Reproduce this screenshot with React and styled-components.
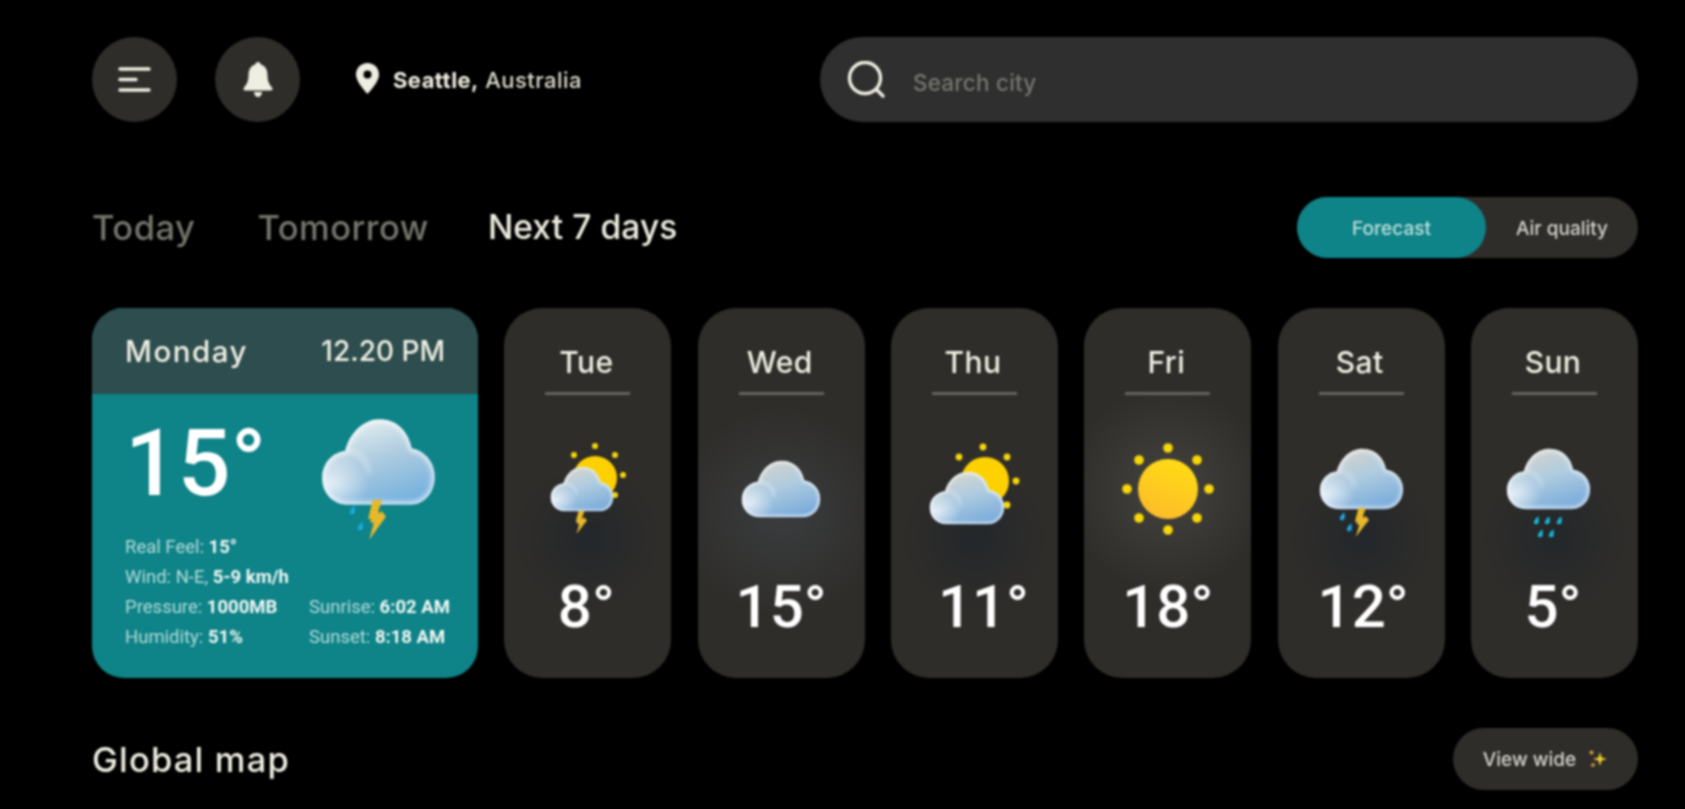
import React, { useId } from "react";
import styled, { createGlobalStyle } from "styled-components";

const cream = "#efeee2";
const panel = "#2f2d2a";
const teal = "#0e8388";

const Global = createGlobalStyle`
  html, body {
    margin: 0;
    background: #000;
    overflow: hidden;
  }
  * { box-sizing: border-box; }
`;

const Page = styled.div`
  width: 1685px;
  height: 809px;
  padding: 37px 47px 0 92px;
  background: #000;
  color: ${cream};
  font-family: Inter, "Liberation Sans", sans-serif;
  filter: blur(0.9px);
`;

const TopBar = styled.div`
  display: flex;
  align-items: center;
  height: 85px;
`;

const RoundButton = styled.div`
  width: 85px;
  height: 85px;
  border-radius: 50%;
  background: ${panel};
  display: flex;
  align-items: center;
  justify-content: center;
  margin-right: 38px;
`;

const Location = styled.div`
  display: flex;
  align-items: center;
  margin-left: 18px;
  font-size: 22px;
  font-weight: 500;
  letter-spacing: 0.45px;
  color: #dcdbcf;
  b { font-weight: 700; color: ${cream}; }
  svg { margin-right: 14px; margin-top: -2px; }
`;

const SearchBar = styled.div`
  margin-left: auto;
  width: 818px;
  height: 85px;
  border-radius: 43px;
  background: #2f2f2f;
  display: flex;
  align-items: center;
  padding-left: 27px;
`;

const SearchText = styled.div`
  margin-left: 26px;
  margin-top: 5px;
  font-size: 22.5px;
  font-weight: 500;
  letter-spacing: 0.2px;
  color: #75756f;
`;

const TabRow = styled.div`
  display: flex;
  align-items: center;
  justify-content: space-between;
  margin-top: 75px;
  height: 61px;
`;

const Tabs = styled.div`
  display: flex;
  gap: 62px;
`;

const Tab = styled.div`
  font-size: ${p => (p.$active ? "33.5px" : "34.5px")};
  font-weight: 500;
  letter-spacing: ${p => (p.$active ? "0.1px" : "0.5px")};
  margin-left: ${p => (p.$active ? "-3px" : "0")};
  color: ${p => (p.$active ? cream : "#75756d")};
`;

const Toggle = styled.div`
  width: 341px;
  height: 61px;
  border-radius: 31px;
  background: ${panel};
  display: flex;
  align-items: center;
`;

const ToggleOption = styled.div`
  height: 100%;
  width: ${p => (p.$active ? "189px" : "152px")};
  border-radius: 31px;
  padding-top: 1px;
  background: ${p => (p.$active ? teal : "transparent")};
  color: ${p => (p.$active ? "#bfe0dc" : "#d5d4cb")};
  display: flex;
  align-items: center;
  justify-content: center;
  font-size: 19px;
  font-weight: 500;
`;

const Cards = styled.div`
  display: flex;
  justify-content: space-between;
  margin-top: 50px;
  height: 370px;
`;

const MainCard = styled.div`
  width: 386px;
  border-radius: 32px;
  overflow: hidden;
  background: ${teal};
  display: flex;
  flex-direction: column;
`;

const MainHead = styled.div`
  height: 86px;
  background: #2e4d4e;
  padding: 0 33px;
  display: flex;
  align-items: center;
  justify-content: space-between;
  font-size: 28px;
  font-weight: 500;
`;

const HeadDay = styled.span`
  font-size: 29.5px;
  letter-spacing: 1.5px;
`;

const MainTop = styled.div`
  height: 138px;
  padding: 0 39px 0 33px;
  display: flex;
  align-items: flex-start;
  justify-content: space-between;
`;

const BigTemp = styled.div`
  font-family: Roboto, sans-serif;
  font-weight: 500;
  font-size: 93px;
  line-height: 92px;
  margin-top: 24px;
  color: #fff;
`;

const Details = styled.div`
  display: flex;
  padding-left: 33px;
`;

const DetailColumn = styled.div`
  width: ${p => p.$width};
  display: flex;
  flex-direction: column;
  justify-content: flex-end;
`;

const Detail = styled.div`
  height: 30px;
  line-height: 30px;
  font-family: Roboto, sans-serif;
  font-size: 18.5px;
  color: #b5dcda;
  white-space: nowrap;
  b { color: #f2f8f4; font-weight: 700; }
`;

const DayCard = styled.div`
  width: 167px;
  border-radius: 38px;
  padding-top: 34px;
  background: ${p => p.$glow}, ${panel};
  display: flex;
  flex-direction: column;
  align-items: center;
`;

const DayName = styled.div`
  height: 40px;
  line-height: 40px;
  font-size: 30px;
  font-weight: 500;
  letter-spacing: 0.4px;
  margin-left: -3px;
`;

const Rule = styled.div`
  width: 85px;
  height: 3px;
  margin-top: 10px;
  background: #65635d;
`;

const IconArea = styled.div`
  height: 188px;
  display: flex;
  align-items: center;
  justify-content: center;
`;

const DayTemp = styled.div`
  height: 46px;
  line-height: 46px;
  margin-top: 1px;
  margin-left: ${p => p.$shift}px;
  font-family: Roboto, sans-serif;
  font-weight: 500;
  font-size: 60px;
  color: #fff;
`;

const MapRow = styled.div`
  display: flex;
  align-items: center;
  justify-content: space-between;
  margin-top: 50px;
  height: 62px;
`;

const MapTitle = styled.div`
  font-size: 34.5px;
  font-weight: 500;
  letter-spacing: 1.2px;
  color: ${cream};
`;

const ViewWide = styled.div`
  width: 185px;
  height: 62px;
  border-radius: 31px;
  background: ${panel};
  display: flex;
  align-items: center;
  justify-content: center;
  gap: 12px;
  font-size: 19px;
  font-weight: 500;
  color: #d5d4cb;
`;

// cloud body, drawn in a 100x72 box and placed with x/y/w/h inside the parent svg
const Cloud = ({ x, y, w, h, top = "#d6d3cc", bottom = "#78aadb", flash }) => {
  const id = useId();
  const d = "M24 71C10 71 1 61 1 49C1 37 10 28 21 27C25 12 37 1 51 1C66 1 76 11 79 25C91 27 99 37 99 48C99 61 90 71 77 71Z";
  return (
    <svg x={x} y={y} width={w} height={h} viewBox="0 0 100 72" preserveAspectRatio="none">
      <defs>
        <linearGradient id={id + "f"} x1="0.3" y1="0" x2="0.72" y2="1">
          <stop offset="0" stopColor={top} />
          <stop offset="0.45" stopColor="#afcce0" />
          <stop offset="1" stopColor={bottom} />
        </linearGradient>
        <radialGradient id={id + "y"} cx="0.5" cy="1" r="0.5">
          <stop offset="0" stopColor="#f4dc6a" stopOpacity="0.95" />
          <stop offset="1" stopColor="#f4dc6a" stopOpacity="0" />
        </radialGradient>
        <radialGradient id={id + "l"} cx="0.08" cy="0.75" r="0.34">
          <stop offset="0" stopColor="#fff" stopOpacity="0.7" />
          <stop offset="1" stopColor="#fff" stopOpacity="0" />
        </radialGradient>
        <clipPath id={id + "c"}><path d={d} /></clipPath>
        <filter id={id + "b"} x="-20%" y="-20%" width="140%" height="140%">
          <feGaussianBlur stdDeviation="2.2" />
        </filter>
      </defs>
      <path d={d} fill={"url(#" + id + "f)"} />
      <g clipPath={"url(#" + id + "c)"}>
        <path d={d} fill={"url(#" + id + "l)"} />
        <path d={d} fill="none" stroke="#fff" strokeOpacity="0.8" strokeWidth="4.5" filter={"url(#" + id + "b)"} />
        <path d="M21 27C32 26 40 34 42 46" fill="none" stroke="#fff" strokeOpacity="0.4" strokeWidth="3" filter={"url(#" + id + "b)"} />
        {flash && <ellipse cx="55" cy="72" rx="30" ry="20" fill={"url(#" + id + "y)"} />}
      </g>
    </svg>
  );
};

const Bolt = ({ x, y, w, h }) => (
  <svg x={x} y={y} width={w} height={h} viewBox="0 0 17 39" preserveAspectRatio="none">
    <path d="M5 0H13.500L10 11.500L12 13L13 10.500L17 16L11 25L2 39L6 22.500L2.500 21.500L4 18.500H1Z" fill="#e6b82a" />
  </svg>
);

const Drop = ({ cx, cy, r = 3.2, fill = "#18a8e0" }) => (
  <path d={`M${cx + r * 0.7} ${cy - r * 1.5}C${cx + r} ${cy} ${cx + r} ${cy + r} ${cx} ${cy + r}C${cx - r} ${cy + r} ${cx - r} ${cy} ${cx + r * 0.7} ${cy - r * 1.5}Z`} fill={fill} />
);

const Dots = ({ points, r, fill = "#f7d708" }) => points.map(([cx, cy]) => <circle key={cx + "-" + cy} cx={cx} cy={cy} r={r} fill={fill} />);

// each svg is 120x110 and sits centred in the card's icon area
const TueIcon = () => (
  <svg width="120" height="110" viewBox="0 0 120 110">
    <circle cx="67" cy="44" r="22" fill="#fdd000" />
    <Dots r="3" points={[[67, 12], [46, 21], [87, 21], [95, 41], [87, 61]]} />
    <Cloud x="22" y="32" w="64" h="46" top="#d9d6cb" />
    <Bolt x="47" y="77" w="12" h="23" />
  </svg>
);

const WedIcon = () => (
  <svg width="120" height="110" viewBox="0 0 120 110">
    <Cloud x="20" y="26" w="80" h="58" />
  </svg>
);

const ThuIcon = () => (
  <svg width="120" height="110" viewBox="0 0 120 110">
    <circle cx="71" cy="47" r="24" fill="#fdd000" />
    <Dots r="3.4" points={[[69, 13], [45, 23], [93, 23], [102, 47], [93, 71]]} />
    <Cloud x="15" y="37" w="76" h="54" top="#d9d6cb" />
  </svg>
);

const FriIcon = () => {
  const id = useId();
  return (
    <svg width="120" height="110" viewBox="0 0 120 110">
      <defs>
        <linearGradient id={id} x1="0.7" y1="0" x2="0.3" y2="1">
          <stop offset="0" stopColor="#ffdc14" />
          <stop offset="1" stopColor="#fdbb2a" />
        </linearGradient>
      </defs>
      <circle cx="60" cy="55" r="30" fill={"url(#" + id + ")"} />
      <Dots r="4.8" points={[[60, 14], [60, 96], [19, 55], [101, 55], [31, 26], [89, 26], [31, 84], [89, 84]]} />
    </svg>
  );
};

const SatIcon = () => (
  <svg width="120" height="110" viewBox="0 0 120 110">
    <Cloud x="18" y="14" w="85" h="62" flash />
    <Bolt x="53" y="74" w="15" h="29" />
    <Drop cx={41} cy={83} />
    <Drop cx={48} cy={94} />
  </svg>
);

const SunIcon = () => (
  <svg width="120" height="110" viewBox="0 0 120 110">
    <Cloud x="12" y="14" w="85" h="62" />
    {[[42, 87], [53, 87], [65, 87], [46, 100], [57, 100]].map(([cx, cy]) => (
      <Drop key={cx + "-" + cy} cx={cx} cy={cy} fill="#14b9d4" />
    ))}
  </svg>
);

const MainIcon = () => (
  <svg width="122" height="126" viewBox="0 0 122 126" style={{ marginTop: 20 }}>
    <Cloud x="4" y="4" w="115" h="88" top="#e6f0f0" bottom="#72b0de" flash />
    <Bolt x="50" y="86" w="19" h="40" />
    <Drop cx={35} cy={97} r={3.6} />
    <Drop cx={43} cy={113} r={3.6} />
  </svg>
);

const shade = "radial-gradient(circle at 50% 62%, #23272b 0, rgba(35,39,43,0) 30%)";

const days = [
  { name: "Tue", temp: "8°", shift: -3, Icon: TueIcon, glow: shade },
  { name: "Wed", temp: "15°", shift: 0, Icon: WedIcon, glow: "radial-gradient(circle at 50% 55%, #3a3d3f 0, rgba(58,61,63,0) 48%)" },
  { name: "Thu", temp: "11°", shift: 18, Icon: ThuIcon, glow: shade },
  { name: "Fri", temp: "18°", shift: 0, Icon: FriIcon, glow: "radial-gradient(circle at 50% 49%, #44433e 0, rgba(68,67,62,0) 50%)" },
  { name: "Sat", temp: "12°", shift: 4, Icon: SatIcon, glow: shade },
  { name: "Sun", temp: "5°", shift: -3, Icon: SunIcon, glow: shade }
];

export default function App() {
  return (
    <Page>
      <Global />
      <TopBar>
        <RoundButton>
          <svg width="33" height="27" viewBox="0 0 33 27" fill="none" stroke={cream} strokeWidth="3.4" strokeLinecap="round">
            <path d="M2 3H31M2 13.500H18M2 24H31" />
          </svg>
        </RoundButton>
        <RoundButton>
          <svg width="30" height="35" viewBox="0 0 30 35" fill={cream}>
            <circle cx="15" cy="2.500" r="2.500" />
            <path d="M15 2C21.500 2 24.500 7 24.500 13C24.500 19 26 22 29 25.500C30 27 29.500 28.500 27.500 28.500H2.500C0.500 28.500 0 27 1 25.500C4 22 5.500 19 5.500 13C5.500 7 8.500 2 15 2Z" />
            <path d="M11 30H19C19 33 17 35 15 35C13 35 11 33 11 30Z" />
          </svg>
        </RoundButton>
        <Location>
          <svg width="23" height="31" viewBox="0 0 23 31">
            <path fillRule="evenodd" fill={cream} d="M11.500 0C18 0 23 5 23 11.500C23 18 16 26 11.500 31C7 26 0 18 0 11.500C0 5 5 0 11.500 0ZM11.500 7.500A4 4 0 1 0 11.501 15.500A4 4 0 1 0 11.500 7.500Z" />
          </svg>
          <span><b>Seattle,</b> Australia</span>
        </Location>
        <SearchBar>
          <svg width="40" height="38" viewBox="0 0 40 38" fill="none" stroke={cream} strokeWidth="3.4" strokeLinecap="round">
            <circle cx="18" cy="17" r="15.500" />
            <path d="M30 29L36 35" />
          </svg>
          <SearchText>Search city</SearchText>
        </SearchBar>
      </TopBar>

      <TabRow>
        <Tabs>
          <Tab>Today</Tab>
          <Tab>Tomorrow</Tab>
          <Tab $active>Next 7 days</Tab>
        </Tabs>
        <Toggle>
          <ToggleOption $active>Forecast</ToggleOption>
          <ToggleOption>Air quality</ToggleOption>
        </Toggle>
      </TabRow>

      <Cards>
        <MainCard>
          <MainHead>
            <HeadDay>Monday</HeadDay>
            <span>12.20 PM</span>
          </MainHead>
          <MainTop>
            <BigTemp>15°</BigTemp>
            <MainIcon />
          </MainTop>
          <Details>
            <DetailColumn $width="184px">
              <Detail>Real Feel: <b>15°</b></Detail>
              <Detail>Wind: N-E, <b>5-9 km/h</b></Detail>
              <Detail>Pressure: <b>1000MB</b></Detail>
              <Detail>Humidity: <b>51%</b></Detail>
            </DetailColumn>
            <DetailColumn $width="150px">
              <Detail>Sunrise: <b>6:02 AM</b></Detail>
              <Detail>Sunset: <b>8:18 AM</b></Detail>
            </DetailColumn>
          </Details>
        </MainCard>
        {days.map(({ name, temp, shift, Icon, glow }) => (
          <DayCard key={name} $glow={glow}>
            <DayName>{name}</DayName>
            <Rule />
            <IconArea><Icon /></IconArea>
            <DayTemp $shift={shift}>{temp}</DayTemp>
          </DayCard>
        ))}
      </Cards>

      <MapRow>
        <MapTitle>Global map</MapTitle>
        <ViewWide>
          View wide
          <svg width="20" height="20" viewBox="0 0 20 20">
            <path d="M12 3L13.600 8.400L19 10L13.600 11.600L12 17L10.400 11.600L5 10L10.400 8.400Z" fill="#f6cf2e" />
            <circle cx="3.500" cy="3.500" r="2" fill="#c9a63a" />
            <circle cx="5" cy="16" r="2" fill="#b5913a" />
          </svg>
        </ViewWide>
      </MapRow>
    </Page>
  );
}
